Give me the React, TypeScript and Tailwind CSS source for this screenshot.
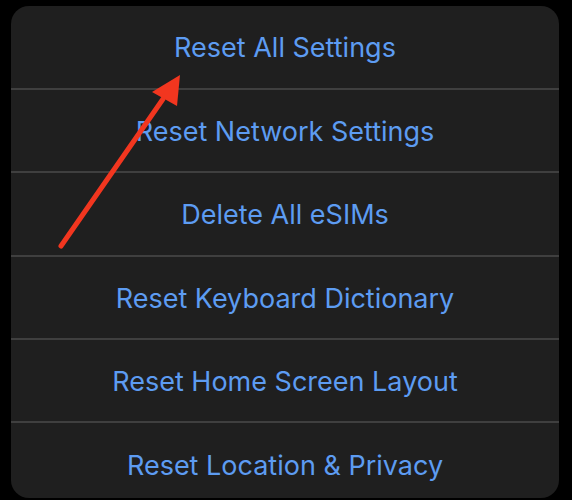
const ITEMS = [
  "Reset All Settings",
  "Reset Network Settings",
  "Delete All eSIMs",
  "Reset Keyboard Dictionary",
  "Reset Home Screen Layout",
  "Reset Location & Privacy",
];

// row heights tuned so separators land where the sheet's do
const ROW_H = ["h-[84px]", "h-[83px]", "h-[84px]", "h-[83px]", "h-[83px]"];

export default function App() {
  return (
    <main className="relative h-[500px] w-[572px] overflow-hidden bg-black pt-[6px] pl-[11px] pr-[13px] pb-[2px] font-['Inter','Liberation_Sans',sans-serif]">
      <div className="flex h-[492px] flex-col overflow-hidden rounded-[18px] bg-[#1f1f1f]">
        {ITEMS.map((item, i) =>
          i === ITEMS.length - 1 ? (
            <button
              key={item}
              className="flex flex-1 items-center justify-center pt-[11px] text-[27px] text-[#5d9cf2]"
            >
              {item}
            </button>
          ) : (
            <button
              key={item}
              className={`flex ${ROW_H[i]} shrink-0 items-center justify-center border-b-2 border-[#3f3f3f] pt-[3px] text-[27px] text-[#5d9cf2]`}
            >
              {item}
            </button>
          )
        )}
      </div>

      {/* red annotation arrow */}
      <svg
        className="pointer-events-none absolute left-0 top-0"
        width="572"
        height="500"
        viewBox="0 0 572 500"
      >
        <line
          x1="61"
          y1="246"
          x2="163"
          y2="99"
          stroke="#f2361f"
          strokeWidth="5"
          strokeLinecap="round"
        />
        <polygon points="180,75 152,92 177,106" fill="#f2361f" />
      </svg>
    </main>
  );
}
